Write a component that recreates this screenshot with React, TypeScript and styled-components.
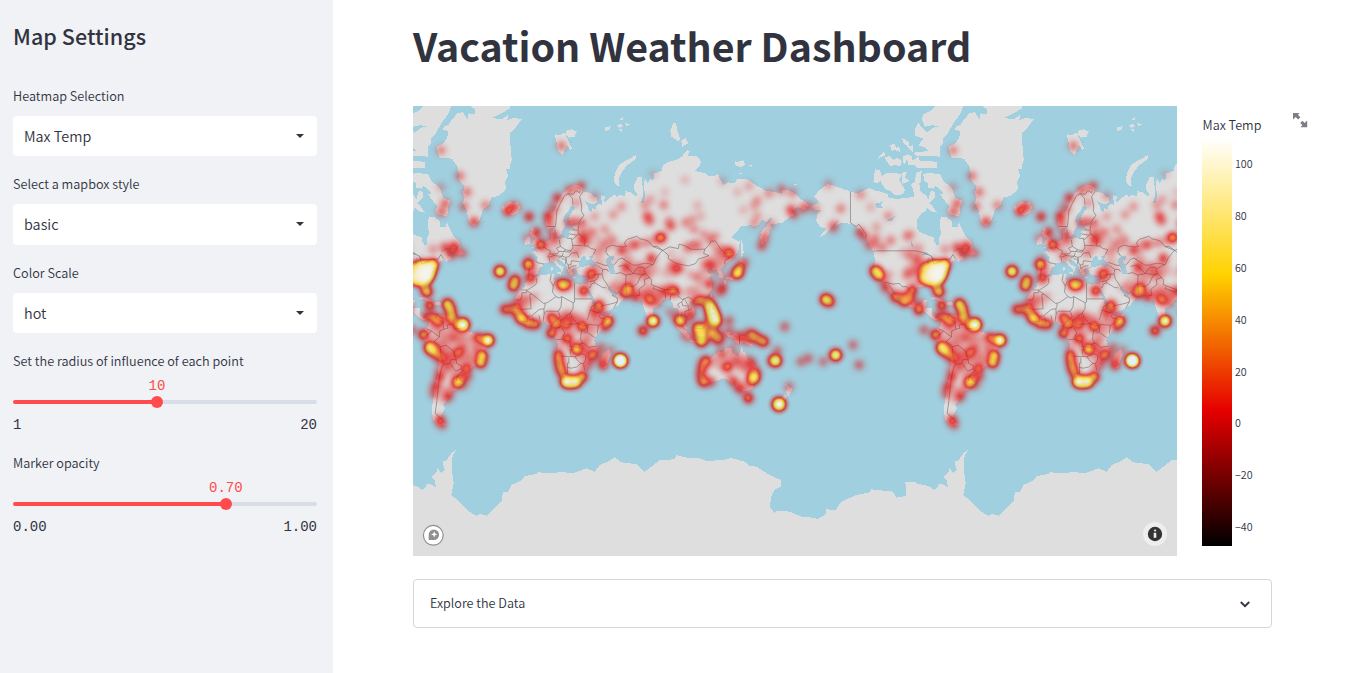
import React from "react";
import styled, { createGlobalStyle } from "styled-components";

const SANS = `"Source Sans Pro", "Noto Sans CJK SC", "Noto Sans", sans-serif`;
const MONO = `"Liberation Mono", monospace`;

const GlobalStyle = createGlobalStyle`
  *, *::before, *::after { box-sizing: border-box; }
  body {
    margin: 0;
    background: #ffffff;
    color: #31333f;
    font-family: ${SANS};
    overflow: hidden;
  }
`;

const Page = styled.div`
  display: flex;
  width: 1350px;
  height: 673px;
`;

const Sidebar = styled.aside`
  flex: 0 0 333px;
  padding: 20px 16px 0 13px;
  background: #f0f2f6;
`;

const SidebarTitle = styled.h2`
  margin: 0 0 37px;
  font-size: 21.5px;
  font-weight: 500;
  line-height: 32px;
  letter-spacing: 0.05px;
`;

const Field = styled.div<{ $gap: number }>`
  display: flex;
  flex-direction: column;
  margin-bottom: ${(p) => p.$gap}px;
`;

const Label = styled.label`
  height: 14px;
  margin-bottom: 13px;
  font-size: 12.68px;
  font-weight: 350;
  line-height: 14px;
  white-space: nowrap;
`;

const Select = styled.div`
  display: flex;
  align-items: center;
  justify-content: space-between;
  height: 40.3px;
  padding: 0 12px 0 11px;
  border-radius: 4px;
  background: #ffffff;
  font-size: 14.4px;
  font-weight: 350;
  line-height: 20px;
`;

const SliderValue = styled.div`
  display: flex;
  justify-content: center;
  width: 60px;
  margin-left: -30px;
  color: #ff4b4b;
  font-family: ${MONO};
  font-size: 14px;
  line-height: 16px;
`;

const SliderTop = styled.div`
  height: 18px;
  margin-top: -3px;
`;

const Track = styled.div<{ $fill: number }>`
  position: relative;
  height: 4px;
  margin: 4px 0 14px;
  border-radius: 2px;
  background: linear-gradient(
    to right,
    #ff4b4b ${(p) => p.$fill}%,
    #d9dde8 ${(p) => p.$fill}%
  );
`;

const Thumb = styled.span<{ $fill: number }>`
  position: absolute;
  top: -4px;
  left: calc(${(p) => p.$fill}% - 6px);
  width: 12px;
  height: 12px;
  border-radius: 50%;
  background: #ff4b4b;
`;

const Range = styled.div`
  display: flex;
  justify-content: space-between;
  font-family: ${MONO};
  font-size: 14px;
  line-height: 14px;
`;

const Main = styled.main`
  flex: 1;
  padding: 18px 0 0 80px;
`;

const Title = styled.h1`
  margin: 0 0 34px;
  font-size: 39.35px;
  font-weight: 700;
  line-height: 54px;
  white-space: nowrap;
`;

const ChartRow = styled.section`
  display: flex;
  align-items: flex-start;
  height: 450px;
`;

const MapFrame = styled.div`
  position: relative;
  width: 764px;
  height: 450px;
  overflow: hidden;
  background: #a0cfdf;
`;

const MapLogo = styled.svg`
  position: absolute;
  left: 9px;
  bottom: 10px;
`;

const InfoBadge = styled.svg`
  position: absolute;
  right: 10px;
  bottom: 10px;
`;

const Legend = styled.div`
  width: 70px;
  margin: 10px 20px 0 25px;
`;

const LegendTitle = styled.div`
  height: 22px;
  padding-left: 0.5px;
  font-size: 12.6px;
  font-weight: 350;
  line-height: 18px;
  white-space: nowrap;
`;

const LegendBody = styled.div`
  display: flex;
  height: 408px;
`;

const ColorBar = styled.div`
  width: 30px;
  height: 408px;
  background: linear-gradient(
    to top,
    #000000 0%,
    #e60000 33.3%,
    #ffd200 66.6%,
    #ffffff 100%
  );
`;

const Ticks = styled.div`
  display: flex;
  flex-direction: column;
  margin-left: 3px;
`;

const Tick = styled.span`
  flex: none;
  height: 51.9px;
  font-size: 10.7px;
  font-weight: 350;
  line-height: 51.2px;
`;

const Expander = styled.button`
  display: flex;
  align-items: center;
  justify-content: space-between;
  width: 859px;
  height: 49px;
  margin-top: 23px;
  padding: 0 18px 0 16px;
  border: 1px solid #d6d6d9;
  border-radius: 4px;
  background: #ffffff;
  color: #31333f;
  font-family: ${SANS};
  font-size: 12.62px;
  font-weight: 350;
`;

const ExpanderLabel = styled.span`
  padding-bottom: 2px;
`;

const FullscreenIcon = styled.svg`
  margin-top: 6px;
`;

/* Web Mercator with a 512px-wide world, drawn in thirds of a pixel. */
const WORLD = 1536;
type Pt = [number, number];

const project = ([lon, lat]: Pt): Pt => [
  378 + (lon * WORLD) / 360,
  675 - (WORLD / (2 * Math.PI)) * Math.asinh(Math.tan((lat * Math.PI) / 180)),
];
const parse = (s: string): Pt[] =>
  s.trim().split(/\s+/).map((p) => p.split(",").map(Number) as Pt);
const toD = (pts: Pt[]) =>
  "M" + pts.map(([x, y]) => `${x.toFixed(1)} ${y.toFixed(1)}`).join("L");
const geo = (s: string) => toD(parse(s).map(project));
const shift = (s: string, dx: number, dy: number) =>
  toD(parse(s).map(([x, y]) => [x + dx, y + dy]));

const LAND_GEO = [
  // Eurasia and Africa
  `-9,37 -9.5,38.7 -8.8,41 -9.2,43.1 -8,43.7 -4,43.4 -1.8,43.4 -1.2,44.6 -1,46 -2.5,47.3 -4.5,48 -4.7,48.5 -3,48.8 -1.5,48.6 -1.8,49.7 0.1,49.5 1.6,50.8 3.5,51.4 4.7,53 7,53.5 8.8,53.9 8.6,55.5 8.2,57 10.5,57.7 10.3,56.5 10.9,55.5 10,54.5 11,54 14,54 16.5,54.5 18.7,54.7 19.8,54.4 21,55.3 21,57 22.6,57.7 24.3,57.2 24.4,58.3 23.5,59.2 27,59.5 30,59.9 28,60.5 25,60.1 22.5,60 21.3,61 21.4,62.5 23,63.8 25.3,65 24.5,65.8 22.3,65.6 21.3,64.5 18.5,63 17.2,61.7 17.2,60.6 18.8,59.9 17.8,58.8 16.5,57.8 16,56.2 14.3,55.5 12.8,55.5 12.5,56.5 11.2,58.8 10.5,59.5 9,58.5 7,58 5.5,58.8 5,60.5 5,62 8,63.5 10.5,64.2 12.5,66 14,67.5 16,68.6 19,69.8 22,70.6 25.8,71.1 28.5,71 31,70.3 30,69.7 33,69.4 36,69.1 40.5,67.8 41,66.7 38,66.1 34,66.7 32.5,67.1 34.7,65 35,64.3 37.5,63.9 37,65.1 39.7,64.6 40,65.6 42.2,66.4 44,66 44.2,67 43.3,68.6 46,68.4 46.5,67.8 45,67 47,66.8 48.5,67.6 53.5,68.8 54.5,68.2 57,68.6 60,68.4 61,69.2 60.2,69.7 64.5,69.3 68.5,68.3 68.8,69.1 66.8,70 67,71.3 68.5,72 69,72.9 72.7,72.8 72.5,71.2 73.5,70 73.2,68.5 71.5,66.4 73.8,66.6 74.5,68.5 74,70.5 73.5,71.5 75.2,72.5 76,71.3 78,72.3 80.5,72.2 80.6,73.5 86.5,74.1 87,75 90,75.6 96,76 100,76.5 104,77.6 106,77.4 104.5,76.6 111,76.7 113.9,75.8 113,75 109,74 112,73.9 118,73.5 119,73 123,73 126,73.5 127,72.5 129.5,71.1 133,71.7 137,71.4 140,72.5 146,72.4 150,71.5 153,70.9 160,69.6 165,69.5 170.5,69 170.8,70 176,69.8 180,68.9 185,67.3 188.5,66.4 190,65.9 188,65.2 186.5,64.4 182,65.4 180,65 178.8,64.5 177.5,64.7 179.4,62.8 177,62.5 171,60.3 166,60 163.5,59.8 163,58.3 162,57.8 162,56.2 160,54.7 160,53.2 158.5,52.9 156.7,51 155.6,54.5 156,56.8 157.5,57.8 161.8,60.4 163.7,61.3 164.4,62.5 160,60.5 156.7,61.5 154.5,59.6 151.5,59 149,59.5 142,59 139,57 135.3,54.8 138.5,53.8 141.3,53.1 140.5,50.5 140,48.4 136.5,45.3 132,43.2 130.7,42.3 127.5,39.8 129.3,37 129.2,35.2 126.5,34.5 126.3,37.5 125,38.5 125,39.7 121.5,39 121.5,40.8 118,39.1 118.8,37.5 122.5,37.1 119.3,35 121.8,32 121.9,30 121.7,28.3 119.5,25.7 116.5,23 113.5,22.2 110.5,21.2 108.3,21.6 106,19.5 106.5,18 109,15.5 109.2,12 107,10.4 105,8.7 104.8,10.3 102.5,12 100.9,13.4 100,13.3 99.3,11 99.5,9.3 100.5,7.3 102.2,6.2 103.4,4.2 104.2,1.4 103.4,1.4 101.3,2.8 100.3,5.6 98.3,8 98.5,10.5 98.6,13 97.3,16.5 95.4,15.8 94.3,16.2 94.3,18.5 92.3,20.8 91.5,22.5 90,21.9 87,21.5 86,20 82.5,16.7 80.2,15.5 80.2,13.3 79.8,10.3 78,8.4 77.4,8.2 76,10.5 74.6,13.8 73,17.5 72.7,20.5 72.3,21.3 70,20.9 69,22.3 67.5,23.9 66.5,25.3 61.6,25.1 57.5,25.6 56.8,27 54.5,26.6 51.3,27.8 50,30.2 48.2,29.9 48.5,28 50.2,26.5 50.8,25 51.5,25.8 51.6,24.2 54.2,24.2 56.2,26 56.6,24.5 58.8,23.5 59.8,22.4 57.8,20.4 55.3,17.5 52.2,15.7 48.5,14 45,12.8 43.4,12.7 42.7,16 41,18.5 39,21.3 37.2,24.8 35,28 35,29.5 34.3,28 32.5,29.8 33.5,28 34,26.8 35.5,24 37.2,21 37.4,18.7 39.3,15.7 41.5,13.5 43.2,11.5 44.5,10.5 48,11.1 51.2,11.9 50.8,9.5 48,4.5 44,1 41.5,-2 39.5,-4.5 39,-6.7 39.5,-8.5 40.5,-11 40.7,-15 37,-17.7 34.8,-20 35.5,-23.8 32.8,-25.8 32.5,-28.5 30,-31.3 27,-33.6 22,-34.1 20,-34.8 18.4,-34.2 18.2,-32 16.5,-28.6 14.8,-25 14.4,-22 12,-18 12.5,-14.5 13.7,-11 12.3,-6 9.2,-2.5 8.8,-0.7 9.6,2 9.5,4 8,4.5 6,4.3 4.4,6.3 1,6 -2,4.8 -4.5,5.2 -7.6,4.4 -11.5,6.9 -13.3,9 -15,11 -16.7,12.5 -17.4,14.7 -16.4,16.5 -16.3,19.5 -17,21 -15.8,24 -13,27.8 -10,29.5 -9.7,31.5 -8,33.4 -6,35.8 -2,35.1 1,36.5 5,36.8 9.8,37.3 11,37 10,34.3 11.2,33.2 15.2,32.3 15.5,31.5 19,30.3 20,31 20,32.5 23,32.6 25,31.6 29,30.9 31,31.5 34.2,31.3 35,33 36,35 36,36.8 33,36.1 30.6,36.6 28,36.8 26.5,38.5 26.3,40 29,41 31.3,41.2 35,42 38,41 41.5,41.5 39,43.7 37.5,44.8 38,46.8 39,47.2 35,46.2 36.5,45.3 33.7,44.4 32.7,45.4 33.5,46 31,46.6 29.5,45 28.6,43.7 27.8,42.5 28.5,41.3 26.5,40.6 23.8,40.3 22.8,39.5 24,38 23,36.6 21.6,37 20.5,38.8 19.4,41 19.3,42 15.5,44 13.7,45.3 12.4,45.2 12.5,44 14,42.4 16,41.6 18.4,40.2 17,40.5 16.5,38.5 15.7,38 15.8,39.8 12.5,41.6 10.3,43.5 8.5,44.3 6,43.1 3.2,43.2 3,41.8 0.5,40.5 -0.3,39 -0.7,37.7 -2,36.7 -5.5,36.1 -6.5,37`,
  // Americas
  `-168,65.6 -164,66.5 -162,66.2 -166.5,68.3 -163,69.8 -157,71.3 -152,70.8 -145,70 -141,69.6 -136,69 -130,70 -128,70.4 -124,69.8 -120,69.5 -115,68.9 -114,67.8 -108,67.7 -102,67.8 -97,68.3 -95.5,68.1 -94.5,71.8 -92,71 -92,69.7 -88,68.5 -86,67.5 -85,69.5 -82,69.7 -81.5,68 -86,66.2 -88,64.2 -91,63.5 -94.5,61 -94.5,58.8 -92.5,57 -85,55.2 -82.2,55 -82,53 -80,51.3 -78.8,52 -79,54.5 -77,56.5 -78.3,59 -77.5,62.3 -73.7,62.3 -70,61 -69.5,59 -66,58.7 -64.5,60.3 -62,57.5 -60,55.2 -57,53.7 -55.7,52.3 -59,50.3 -66,50.2 -69,48.6 -65,49.2 -65,47.2 -61,45.5 -65.5,43.6 -66.5,45 -70,43.7 -70.8,42 -74,40.6 -76,37 -76,35 -81.3,31.5 -80.2,26 -81.2,25.3 -82.7,28 -84,30 -89.5,30 -91,29.3 -95,29.2 -97.3,27.5 -97.6,23 -96,19.3 -94.5,18.2 -91,18.7 -90,21 -87,21.5 -88,18 -88.5,15.8 -84,15.8 -83.3,14 -83.5,11 -81,9 -79,9.5 -77.3,8.6 -75.5,10.7 -71.5,12.3 -71.5,10.9 -68,11 -62,10.6 -60,8.5 -57,6 -52,4.8 -50,1.5 -50,-.5 -48,-.7 -44.3,-2.7 -40,-2.9 -35.3,-5.2 -34.9,-8 -37,-11.5 -39,-13 -39,-17.7 -41,-22 -44.5,-23 -48.5,-26 -48.8,-28.5 -52.2,-32.2 -54.5,-34.9 -58.4,-34 -57,-36.5 -58,-38.2 -62,-39 -62.3,-40.8 -65,-41 -63.7,-42.5 -67.5,-46 -65.8,-47.5 -69,-51 -68.3,-53 -65.2,-54.7 -70,-55.5 -74.5,-52.5 -75.5,-48 -74.5,-44 -73.5,-40 -73.5,-37 -71.5,-31 -70.3,-22 -70.3,-18.3 -76.2,-14 -79.5,-7.5 -81.3,-5 -80.2,-2.5 -80,0.8 -77.5,4 -77.8,7.5 -80,7.4 -83,8.3 -85.8,10.5 -88,13 -94,16 -99,16.6 -105.5,20.2 -105.5,22.6 -109.3,26 -112.5,30 -114.7,31.7 -111.5,26 -109.5,23 -112.2,25 -115,28 -117,32.5 -120.5,34.5 -124,40 -124,46 -124.7,48.4 -122.5,48.5 -127,51 -130,54.5 -134,58 -140,59.8 -145,60.3 -149,60 -152,59.2 -150,61.2 -154,59 -158,56.3 -163,54.8 -158,58.3 -162,58.7 -165,61 -164.5,63 -161,64.5 -166,64.5`,
  // British Isles, Ireland
  `-5.5,50 -3,50.6 1.3,51.1 1.7,52.7 0,53.5 -1.5,55 -3,56 -2,57.5 -4,57.7 -3,58.6 -5,58.6 -6,56.7 -5,55 -3,54.5 -3.2,53.4 -4.5,53.2 -4.2,52.3 -5.2,51.8 -3,51.4`,
  `-6.2,52.2 -9.8,51.6 -9.8,53.5 -8.3,55.1 -6,55 -6,53.5`,
  // Mediterranean islands
  `12.5,38 15.6,38.2 15.1,36.7`, `8.3,39 9.7,39.2 9.6,41.1 8.3,40.8`, `23.6,35.4 26.2,35.2 24.5,34.9`, `32.4,34.8 34.5,35.6 33,34.6`,
  // Japan, Sakhalin
  `130,31.3 131.5,31.5 131.8,33.6 130,33.5`, `131,34.2 133,34.4 135.5,33.6 137,34.6 140,35.1 141,36.8 142,39.5 141.2,41.4 140,40.5 139.5,38.3 137,37 135.8,35.6 132.6,35.5`,
  `140,42.2 141,41.8 143.2,42.1 145.3,43.3 141.8,45.4 141.5,43.4`, `142.2,54.2 143.2,52.5 143.3,49.3 144.5,48.8 142.8,47.3 143.3,46.6 142,46 142,50 141.8,53`,
  // South-east Asia
  `120.1,23.3 121,22 122,25 121.3,25.2`, `109,19.5 111,20 110,18.4`, `80,9.7 81.8,7.3 80.4,6`,
  `95.3,5.6 98,4.5 103.5,0 106,-3 105.8,-5.8 104.3,-5.6 100.5,-1 97.5,2`, `105.2,-6.6 108.5,-6.7 114.4,-7.8 114.3,-8.6 108,-7.7`,
  `109,1.5 111.3,2.6 113.5,3.3 116.7,7 119,5.2 117.7,2 116.5,-3.5 114.5,-4.1 110.2,-2.9`, `119.8,.5 125,1.5 121,.4 123.3,-1 121.7,-2 123,-5 121,-2.8 119.6,-5.5 118.8,-2.8`,
  `120.6,18.4 122.2,18.4 121.6,15 124,12.7 120.7,13.8`, `122,7 125.5,9.7 126.5,7.3 125.4,5.6 123.5,7.6`, `122,11.8 123.4,10.8 125.5,12.3 124.5,10.2 122.5,9.8`,
  `131,-.8 134,-.9 135,-3.3 138,-1.7 144.5,-3.8 147.8,-6 147.2,-7.4 150.7,-10.5 147.5,-10 144,-7.7 141,-9.1 138.2,-8.3 138,-5.5 133,-4 132,-2.8`, `148.5,-5.7 152,-4.3 151,-6.2`,
  // Madagascar
  `49.3,-12 50.4,-15.5 47.2,-25 45,-25.5 43.3,-22 44.5,-16.2 48,-13.6`,
  // Australia, New Zealand
  `142.5,-10.8 143.7,-14.4 145.3,-15 146.4,-19 149.3,-21.2 153,-25.3 153.5,-28.3 151.5,-33 150,-37.4 146.5,-39 143.5,-38.8 140,-37.5 138.3,-35.5 137.5,-33 135.8,-34.9 132.2,-32 129,-31.6 124,-33.2 120,-34 116,-35 115,-34 115.7,-31.7 113.5,-26 114.1,-22 117,-20.6 122,-18 124,-16.3 126.8,-14 129.6,-15 131,-12.2 135.5,-12 135.6,-15 140,-17.7 141.6,-14`,
  `144.7,-40.8 148.2,-40.9 147.2,-43.5 146,-43.4`, `172.8,-34.5 175.5,-36.6 178.4,-37.8 175.3,-41.6 173.8,-39.3 174.7,-37.3`, `172.8,-40.6 174.2,-41.8 170.7,-45.9 168.5,-46.6 166.6,-45.9`,
  // Caribbean, Newfoundland, Vancouver Island
  `-84.9,21.9 -82.5,23.1 -79,22.4 -74.2,20.2 -77.5,19.9 -80,21.6`, `-74.4,18.4 -73,19.9 -70,19.7 -68.4,18.5 -71,17.7`, `-59.2,47.7 -55.9,51.5 -55,49.6 -52.8,47.5 -55.5,47`, `-128,50.8 -125,50 -123.5,48.4`,
  // New Caledonia
  `164,-20.2 167,-22.3 165.5,-21.8`,
];

const WATER_GEO = [
  `47,45 50,46.8 53,46.8 53,45.3 51,44.5 50.5,43.5 53,42 52.8,40 54,37 50,37.4 49,40.2 47.5,43`,
  `-124,66.3 -121,66.5 -118,67 -119.5,66 -118,65 -122,65`, `-116,61 -113,61.8 -109,62.8 -112,61`, `-98.5,53.8 -96.5,51 -98,50.5`,
  `104,51.6 108,53 110,55.6 107,52.4`, `31.8,.3 34,.2 33,-2.5 31.8,-1.5`, `58.5,45.5 61,46 60,44`, `30.5,61 32.5,60.8 31,60`,
  `-92,46.8 -88,48.5 -84.5,46.8 -88,47`, `-87.5,42 -86,42.5 -85,45.8 -87.5,45`, `-82,43.5 -80,45 -84,46`,
];

const LAND_TRACED = [
  shift(`265,122 285,113 298,95 300,75 285,72 288,60 300,58 312,40 328,22 345,18 352,30 358,42 362,22 380,25 380,10 368,0 485,0 485,8 460,22 432,36 462,40 480,26 478,42 500,35 522,40 510,55 495,75 485,80 485,110 490,130 488,150 494,155 488,170 486,188 474,190 480,210 470,230 475,245 470,255 450,270 430,275 420,300 405,310 395,340 378,362 362,345 355,310 345,290 350,275 345,262 350,240 335,225 330,185 312,158 275,155`, 1341, 0),
  shift(`228,0 310,0 300,25 285,45 270,70 262,85 250,95 248,115 240,120 240,152 210,150 170,150 160,140 205,135 195,125 175,118 190,98 165,90 165,70 175,50 190,70 200,80 220,65 242,60 215,58 195,62 185,40 190,25 210,15`, 1341, 0),
  shift(`145,165 165,160 175,150 180,165 210,165 230,168 232,185 170,185 165,178 145,178`, 1341, 0),
  shift(`45,190 60,192 65,210 80,202 105,200 125,205 118,220 125,235 135,250 130,262 118,268 100,265 90,255 78,250 68,238 62,225 50,232 40,228`, 1341, 0),
  shift(`75,155 90,150 100,162 112,155 125,165 120,182 105,176 92,182 80,165`, 1341, 0),
  shift(`52,160 60,148 72,137 76,150 65,152`, 1341, 0),
  shift(`125,95 135,100 147,110 145,123 130,110`, 1341, 0),
  shift(`90,118 105,113 108,125 118,122 120,138 105,132 95,135`, 1341, 0),
  shift(`130,150 145,145 158,152 150,175 140,160 135,176 128,170`, 1341, 0),
  shift(`140,120 160,118 158,138 150,132`, 1341, 0),
  shift(`125,200 140,198 135,215 150,225 140,228 125,235`, 1341, 0),
  shift(`168,200 185,195 183,225 170,240 176,270 162,275 160,250 152,235 165,228`, 1341, 0),
  shift(`190,205 205,200 240,205 250,225 275,245 285,275 308,285 300,305 298,332 270,325 262,315 268,300 255,285 240,265 250,262 235,245 225,240 222,248 205,245 205,232 192,225`, 1341, 0),
  shift(`203,290 215,297 230,320 210,315 200,305`, 1341, 0),
  `M425 85L440 88L455 80L462 95L470 112L478 128L472 134L462 116L455 130L450 148L435 135L430 105Z`,
  `M458 75L475 70L491 76L485 92L470 95L460 88Z`,
  `M610 238L602 225L606 200L618 178L635 165L655 155L668 147L671 157L640 180L626 200L617 220L620 240Z`,
  `M575 65L595 60L588 72L577 75ZM612 58L625 52L630 62L620 65ZM620 42L630 30L632 40ZM636 52L656 54L640 60ZM617 70L628 68L626 77Z`,
  `M772 75L780 52L789 50L792 70L802 100L795 105L775 92ZM805 105L818 96L825 112L808 122Z`,
  `M965 165L975 168L990 163L998 175L985 183L966 178ZM1003 175L1018 178L1017 183ZM978 200L988 203L980 206ZM1143 233L1155 236L1145 239Z`,
  `M265 302L278 298L288 285L300 292L314 288L322 305L316 318L300 328L275 322Z`,
  shift(`0,165 12,170 30,180 45,160 68,170 66,152 55,140 68,130 75,115 85,130 95,118 88,95 100,92 115,70 132,58 120,75 117,85 118,130 122,160 115,195 145,220 168,245 190,257 200,252 222,257 240,238 265,215 270,185 285,185 295,165 325,152 335,138 370,132 375,127 430,130 435,125 480,130 520,115 545,125 560,105 585,95 605,82 625,97 672,103 695,125 715,110 740,90 785,88 790,75 830,85 855,83 880,93 930,90 955,84 995,95 1010,108 1030,110 1070,135 1103,150 1103,170 1085,178 1073,205 1072,232 1085,250 1090,242 1130,245 1165,260 1200,263 1215,267 1240,252 1240,238 1268,240 1285,215 1330,195 1370,187 1375,178 1440,185 1450,203 1480,198 1477,155 1505,155 1512,162 1536,165 1536,380 0,380`, 0, 972),
];

const BORDERS = [
  `-123,49 -95,49 -89,48 -84,46.5 -82.5,42.5 -79,43.5 -75,45 -71,45 -69,47.3 -67,45`,
  `-141,69.6 -141,60.3 -137,59 -135,59.8 -130,56 -130,54.7`, `-117,32.5 -111,31.3 -106.5,31.7 -104.5,29.6 -101.5,29.8 -99.5,27.5 -97.2,26`,
  `5.5,59 11.5,59 12,61 12.5,64 14.5,66 18,68.5 20.5,69 24,68.8 26,69.8 28.5,69.2 29,69.7`, `20.5,69 23.5,67.8 24,65.9`, `31,69.6 28.5,68.2 30,65.7 29.7,64.2 31.5,62.8 28,60.5`,
  `28,59.4 27.5,57.5 28.2,56.1 31,54.8 32.5,53.2 31.5,51.3 34.5,51.2 36,50.2 40,49.5 38.3,47.2`, `24,57.8 27.3,57.6`, `21,56.3 26.5,55.7 28.2,56.1`, `22.8,54.4 23.5,53.9 26.5,55.5`, `19.8,54.4 22.8,54.4 23.5,52 24,50.7 22.5,49 18.8,49.5 15,51 14.3,53.9`, `23.5,51.5 30.5,51.3`,
  `15,51 12.2,50.2 13.8,48.7 17,48.7 18.8,49.5`, `17,48.7 22,48.4 22.5,49`, `9.6,47.5 13,47.6 13.8,48.7`, `7.5,47.6 9.6,47.5 10.5,46.8 7,46 6.1,46.3 7.5,47.6 8.1,49 6.2,49.5 2.6,51`, `7,46 7.5,43.8`, `10.5,46.8 13.5,46.5 16.4,46.5 17,48.1`, `13.7,45.5 16.4,46.5 18.8,45.9 21,46.2 22.8,47.9 26.7,48.2 28.2,45.5`,
  `18.8,45.9 19.3,44.8 19.2,43.5 20.5,42 22.5,42.3 22.7,44.2 28.5,43.8`, `15.8,45.2 19,45 18.5,42.6`, `20.5,42 20.9,40 22.9,41.3 26.4,41.7`, `-1.8,43.4 3.2,42.5`, `-8.7,42 -6.5,41.9 -7.2,38 -7.4,37.2`,
  `49,46.5 47,48.4 47.5,50.4 51,51.6 55,51 59,50.7 61.5,51 60,52.5 62,54 69,55.3 71,54.2 73.5,54 77,53.2 80,51 83,51 87,49.2 92,50.8 98,50 98.5,52 102.5,51.3 107,49.7 113,49.7 116.7,49.8 120,52 120.8,53.3 124,53.3 127.5,50 131,47.7 135,48.4 133,45 131,44.5 130.6,42.5`,
  `87,49.2 91,47 91,45.2 96.5,42.8 105,41.6 110,42.7 112,45 119.5,46.7 115.7,47.8 116.7,49.8`, `80,51 87,49.2 85.5,48.3 82.3,45.4 80.2,42.2 74,40 73.8,39.5 75,37.3 79,34 79,31 81.2,30.2 88,28 92,27.8 97.3,28.3 98.7,25.5 97.5,24 101,21.5 105,23.2 108,21.6`,
  `53,42.2 56,45 58.5,45.5 61,44.3 66,42 70,42 71,42.4 75,43 80.2,42.2`, `56,41.3 60,42 66.5,37.4 61.2,36.6 57,38 54,37.3`, `66.5,37.4 71.5,37 74.8,37.2`, `66.5,37.4 67.8,39.5 70.5,41 73.5,40.7`, `61.2,36.6 60.9,31.5 61.7,25.2`, `60.9,29.8 66.3,29.8 69.3,31.8 71.5,36 74.8,37.2`, `68.2,23.8 71,24.5 70,28 74.5,31 74,34 78,35.3`,
  `81.2,30 80.1,28.8 84,27.3 88,26.4 88,28`, `88.8,26 89,22`, `92.3,21 92.6,24.1 97,28`, `98.8,16.2 97.5,18.5 100.5,20.2 101,17.6 104.7,17.4 105.5,14.4 102.5,13.6 102.8,11.8`, `100.5,20.2 102,22.4`, `105.5,14.4 107.5,15.5 104,19 102.5,21.5`,
  `41.5,41.5 44.8,39.7 44.3,37 42.3,37.2 36.5,36.5`, `44.8,39.7 48,39.6 48.8,38.4`, `40,43.5 46.5,41.8 48.5,41.9`, `44.3,37 45.5,34 48,31 48.5,30`, `42.3,37.2 41,34.4 38.8,33.3 35.8,32.7`, `38.8,33.3 39.2,32.1 37,31.5 36,29.2 34.9,29.5`, `39.2,32.1 44.7,29.2 47.5,29`, `51.5,24.3 55.2,22.7 55,20 52,19 48,18.2 43.3,17.3 42.8,16.5`, `55,20 52.5,15.7`,
  `25,31.6 25,22 25,20 24,19.5 16,23.5 14.2,22.6 12,23.5 9.5,26.3 10,30.2 7.8,33.5 8.6,37`, `25,22 36.9,22`, `10,30.2 11.5,33`, `12,23.5 5.8,19.5 3.3,19 -4.8,25 -8.7,27.4 -3,30.5 -1.5,32.2 -2,35`, `-8.7,27.7 -13,27.7`, `-8.7,27.4 -8.7,26 -12,26 -12,23.4 -13,21.3 -17,21.2`, `-4.8,25 -6.5,25 -5.5,15.5 -12,15 -16.5,16.2`, `4.2,19 4.2,16.8 3.5,15.4 0.2,15 -5.4,10.5 -8,10.2 -11.5,12.3`, `3.5,15.4 3.6,11.7 2.8,6.4`, `3.6,11.7 5,13.8 13.5,13.7 15.5,16.8 16,23.5`, `13.5,13.7 15,10 9,4.8`, `24,19.5 24,15.7 22,12.6 23.5,8.8 27.3,5.1 31,3.7 36,4.5 42,4 48,8 43,9 42.5,11`, `34,4.2 34,-.9 37.7,-3.6 39.2,-4.7`, `41.8,4 41,-1.6`, `22,12.6 15.3,7.5 14.5,2.2 9.8,2.2`, `15.5,7.5 18.5,4.5 27.3,5.1`, `16,2.2 18,-1 16.2,-5.8 12.3,-6`, `16.2,-5.8 21.8,-7.3 22,-11 24,-11 24,-13 22,-13 22,-16.2 23.3,-17.7 14,-17.4`, `30.8,3.5 29.5,-2.5 29.3,-6 30.8,-8.5 28.4,-9.2 28.6,-12 29.8,-12.2 24,-11`, `30.8,-8.5 33,-9.5 34.8,-11.5 40.4,-10.5`, `21,-18.3 21,-22 20,-22 20,-28.4 16.5,-28.6`, `23.3,-17.7 25.3,-17.8 27.7,-20.8 29.4,-22.2 26.5,-24.5 22.7,-25.3 20,-24.8`, `29.4,-22.2 31.3,-22.4 32,-25.8 32.1,-26.8`, `25.3,-17.8 30.4,-15.7 33,-17 32.5,-20.5 31.3,-22.4`, `34,8 36,14 37,17 38.6,18`, `36,14.5 42.5,12.5`, `-4.7,10 -3,5`, `0,11 1,6`, `-8.5,10 -8,6.5 -11,7`,
  `-77.4,8.6 -77,7.5`, `-71.5,12 -73,9.2 -67.5,6.2 -67,1.2 -70,-.2 -70,-4.2 -73.7,-7.3 -70.5,-9.5 -69.5,-11 -68.8,-17.5 -70.3,-18.3`, `-69.5,-11 -65.3,-10 -60.3,-13.8 -58.2,-19.8 -58,-22 -54.3,-24 -54.6,-25.6 -53.7,-27.2 -57.6,-30.2 -58.3,-33.5`, `-62.6,-22.2 -58.6,-27.2 -54.6,-25.5`, `-68.8,-17.5 -67,-22.8 -62.6,-22.2 -61.8,-19.6 -58.2,-19.8`, `-67,-22.8 -68.5,-25 -70,-31 -71,-38 -71.8,-44 -73,-50 -68.5,-52.3`, `-57.6,-30.2 -53.4,-33.7`, `-67,1.2 -64,2 -64.7,4.2 -60.7,5.2 -59.8,8.3`, `-60.7,5.2 -59.5,1.3 -52.5,2.3 -51.5,4.2`, `-78.8,1.4 -75.4,-.1 -80.3,-4 -80.3,-3.4`, `-75.4,-.1 -70,-4.2`,
  `141,-2.6 141,-9.1`, `109.6,2 114.8,1.5 117.6,4.2`,
];

const LAND_D = LAND_GEO.map((s) => geo(s) + "Z").concat(LAND_TRACED).join("");
const WATER_D = WATER_GEO.map((s) => geo(s) + "Z").join("");
const BORDER_D = BORDERS.map(geo).join("");

/* Weather stations: x, y, weight, grouped by map quadrant. */
const STATIONS: { dx: number; dy: number; data: string }[] = [
  { dx: 0, dy: 0, data: `84,133,.15 140,210,.18 84,243,.1 162,258,.18 97,292,.2 85,318,.2 152,302,.18 218,298,.15 183,348,.27 285,315,.35 300,300,.22 315,305,.1 348,332,.3 445,120,.18 433,275,.28 468,252,.2 485,245,.08 505,240,.22 490,290,.12 545,270,.12 405,330,.3 405,350,.15 425,310,.15 415,300,.1 545,332,.1 600,326,.12 625,302,.12 720,203,.06 712,280,.1 695,297,.12 703,330,.22 710,345,.18 752,297,.15 755,258,.06 370,378,.28 420,385,.2 340,395,.12 470,350,.15 490,348,.12 508,352,.18 575,370,.12 540,378,.12 743,395,.45 510,400,.3 510,380,.1` },
  { dx: 768, dy: 0, data: `5,360,.22 0,345,.12 50,350,.15 75,370,.13 70,340,.1 85,298,.08 95,330,.08 48,222,.07 105,385,.12 125,400,.17 140,390,.1 240,240,.1 205,258,.07 160,225,.08 265,283,.12 255,300,.1 222,312,.07 265,330,.1 255,352,.12 300,262,.14 337,250,.18 370,260,.15 365,310,.22 375,325,.2 402,308,.18 418,300,.15 440,310,.12 478,235,.12 515,308,.15 495,358,.18 492,370,.1 305,355,.15 290,385,.1 285,400,.18 278,420,.22 575,265,.14 605,303,.08 658,330,.13 622,362,.1 572,378,.22 585,390,.16 620,395,.13 600,420,.15 640,425,.15 620,415,.1 665,403,.16 715,390,.15 725,385,.08 750,425,.1 155,430,.12` },
  { dx: 0, dy: 402, data: `60,28,.12 95,22,.22 125,18,.27 110,30,.13 130,35,.13 115,45,.2 150,40,.18 383,15,.42 345,72,.52 350,78,.15 422,0,.15 420,50,.17 485,40,.13 575,10,.13 600,0,.1 560,30,.13 625,30,.27 665,15,.22 700,8,.13 715,55,.3 475,95,.18 28,75,.7 60,74,.65 50,82,.75 45,88,.8 48,100,.8 42,110,.85 35,118,.75 15,88,.55 12,105,.6 25,102,.8 28,120,.6 12,122,.5 30,90,.7 5,80,.35 0,115,.45 42,155,.55 35,145,.2 50,195,.38 60,232,.33 40,230,.3 75,240,.38 103,192,.6 112,208,.5 116,228,.5 118,240,.2 150,255,1 148,252,.5 225,301,.98 195,292,.3 205,300,.2 208,347,.6 203,368,.6 32,284,.5 50,322,.7 60,332,.5 70,345,.27 85,352,.22 135,428,.6 128,420,.15 150,420,.15 162,385,.36 135,337,.35 120,295,.18 150,325,.18 85,310,.12 105,350,.18 125,360,.1 105,380,.17 165,410,.18 80,410,.28 68,440,.27 65,465,.15 105,470,.25 95,450,.08 80,540,.33 88,555,.18 100,320,.08 150,290,.1 175,350,.1 185,325,.08 80,265,.1 261,94,.82 301,138,.55 306,120,.5 355,112,.33 345,108,.1 450,135,.6 438,128,.2 465,132,.3 512,152,.42 535,100,.35 275,208,.35 292,208,.22 310,208,.35 325,235,.6 318,225,.2 345,250,.4 368,252,.42 320,185,.18 345,180,.13 365,170,.1 415,232,.4 428,250,.4 415,280,.45 440,245,.12 460,255,.38 460,230,.18 480,235,.18 507,260,.45 463,295,.38 490,328,.58 515,315,.12 540,345,.38 520,340,.12 585,243,.6 575,262,.28 558,195,.42 565,215,.2 540,215,.2 545,235,.1 530,290,.1 515,300,.12 565,320,.15 570,375,.33 575,360,.1 595,330,.13 622,362,1.5 437,345,.38 437,362,.33 441,380,.4 447,398,.4 460,425,.95 474,427,.65 488,425,.85 508,410,.5 520,380,.15 530,360,.13 640,80,.3 645,145,.48 637,162,.33 670,170,.28 710,180,.38 700,160,.12 735,180,.12 605,145,.12 690,100,.12 680,85,.1 720,150,.12 750,155,.18 765,158,.16 720,243,.95 690,272,.42 700,110,.1 735,195,.08 660,130,.08 660,105,.08 530,125,.12` },
  { dx: 768, dy: 402, data: `183,42,.4 180,30,.12 205,100,.65 210,88,.35 218,75,.2 228,65,.12 180,110,.15 160,145,.3 155,160,.1 123,130,.25 15,152,.42 25,85,.27 10,75,.1 85,110,.1 125,75,.2 130,90,.08 80,15,.16 60,25,.12 110,70,.08 75,155,.1 95,180,.4 78,186,.28 120,175,.18 123,200,.7 130,215,.8 135,230,.8 138,242,.8 120,190,.2 33,242,.65 65,225,.22 90,265,.58 97,285,.58 97,305,.58 80,262,.2 108,262,.25 130,280,.45 145,295,.28 180,242,.2 180,270,.13 45,285,.13 150,310,.13 0,215,.1 215,290,.18 250,285,.42 265,295,.28 285,305,.42 240,305,.13 320,362,.85 310,362,.25 325,332,.18 190,325,.15 160,340,.18 205,365,.12 175,380,.38 110,362,.42 100,385,.28 102,425,.42 95,405,.2 125,425,.18 150,375,.06 195,425,.22 212,447,.28 238,475,.4 245,370,.22 262,395,.22 255,412,.7 250,425,.25 225,380,.08 330,493,1 330,492,.6 360,440,.18 347,260,.2 395,365,.17 418,355,.19 463,365,.17 500,345,.9 552,315,.18 570,375,.2 470,178,.65 482,185,.4 620,93,.6 630,105,.6 650,140,.22 660,105,.1 680,172,.4 705,185,.42 720,175,.3 730,150,.35 700,170,.13 750,210,.42 755,190,.12 765,270,.2 720,45,.16 745,60,.18 715,100,.13 740,92,.15 765,90,.3 768,110,.35 755,120,.12` },
];

/* Fainter stations that fill in the inhabited regions: x, y pairs. */
const BACKGROUND: { dx: number; dy: number; w: number; data: string }[] = [
  { dx: 0, dy: 402, w: 0.08, data: `75,285 95,285 115,280 135,290 130,270 100,300 60,300 165,305 178,290 140,310 90,335 112,330 130,350 160,345 172,365 150,360 145,380 140,400 120,395 90,395 85,375 75,392 150,405 155,440 118,445 112,458 75,425 60,455 95,478 70,255 88,250 60,260 110,255 130,250 190,320 195,335 78,360 95,365 115,370 55,205 90,236 120,255 75,325` },
  { dx: 0, dy: 402, w: 0.075, data: `300,195 335,200 310,220 422,262 445,270 475,250 495,245 520,265 535,255 555,250 470,312 450,300 480,280 500,318 520,328 545,330 560,335 530,372 548,225 430,310 432,330 512,375 445,225 470,220 500,230 515,240 540,270 545,200 335,240 355,255 330,170 310,180 345,125 480,315 500,345 560,355 580,345` },
  { dx: 0, dy: 402, w: 0.065, data: `400,22 430,8 440,-10 380,0 365,-15 410,-30 412,-48 400,10 500,-20 525,-10 528,8 490,20 555,0 580,22 548,42 600,12 350,50 370,90 410,45 500,30 515,15 460,-50 480,-55 560,60 550,75 590,-10 530,-25 575,85 545,110 520,105 640,25 650,12 680,10 720,5 750,-10 725,-5` },
  { dx: 0, dy: 402, w: 0.065, data: `545,90 560,105 525,112 612,125 620,150 655,155 690,165 722,165 745,170 670,90 652,95 700,88 680,110 715,78 728,92 650,60 642,50 600,60 630,100 645,115 670,75 690,75 710,100 740,150 760,140 700,175 725,190 655,165 625,160 590,140 630,135 685,150 705,140` },
  { dx: 768, dy: 402, w: 0.06, data: `5,40 20,92 40,60 50,22 95,30 140,50 150,70 165,60 115,85 100,100 60,150 90,145 112,132 95,120 50,160 160,125 30,228 48,225 20,215 60,210 75,215 -10,100 0,85 10,100 35,85 15,65 60,15 90,10 105,75 120,60 135,75 150,50 168,45 170,30 150,30 135,20 165,75 145,95 155,110 130,145 145,155 5,140 25,160 75,110 60,100` },
  { dx: 768, dy: 402, w: 0.1, data: `115,225 112,245 80,290 72,292 120,300 155,298 190,282 200,290 230,300 240,275 135,265 150,285 140,285 108,275 105,298 165,285 55,295 15,230 40,255 110,185 60,235 150,250 125,255 270,298 275,305 225,285 210,300` },
  { dx: 768, dy: 402, w: 0.07, data: `95,370 92,395 125,370 140,360 165,352 190,355 215,350 238,355 250,362 225,368 218,385 238,388 245,400 242,412 182,412 188,420 225,440 235,462 112,430 165,385 190,370 200,345 150,340 205,370 130,425 95,412 100,372 205,438 240,430 262,405 255,380` },
  { dx: 768, dy: 402, w: 0.06, data: `700,35 730,22 755,45 735,75 720,88 755,75 750,100 670,155 690,165 715,165 732,165 740,192 640,120 645,130 665,160 740,50 710,110 725,105 650,150 715,185 735,135 612,85 735,180 745,200 720,160 590,0 610,5` },
];

const STATION_POINTS = STATIONS.flatMap(({ dx, dy, data }) =>
  data.trim().split(/\s+/).map((p) => {
    const [x, y, w] = p.split(",").map(Number);
    return { x: x + dx, y: y + dy, w };
  })
).concat(
  BACKGROUND.flatMap(({ dx, dy, w, data }) =>
    parse(data).map(([x, y]) => ({ x: x + dx, y: y + dy, w }))
  )
);

const KERNEL = Array.from({ length: 13 }, (_, i) => i / 12);
const kernelAt = (t: number) => Math.exp(-4.5 * t * t);

const COPIES = [-WORLD, 0, WORLD];

function HeatMap() {
  return (
    <svg width="764" height="450" viewBox="0 0 2292 1350" display="block">
      <defs>
        <radialGradient id="dot">
          {KERNEL.map((t) => (
            <stop key={t} offset={t} stopColor="#000" stopOpacity={t === 1 ? 0 : kernelAt(t)} />
          ))}
        </radialGradient>
        <radialGradient id="hotDot">
          {KERNEL.map((t) => (
            <stop key={t} offset={t} stopColor="#000" stopOpacity={t === 1 ? 0 : Math.min(1, 1.8 * kernelAt(t))} />
          ))}
        </radialGradient>
        <filter id="heat" filterUnits="userSpaceOnUse" x="0" y="0" width="2292" height="1350" colorInterpolationFilters="sRGB">
          <feColorMatrix type="matrix" values="0 0 0 1 0  0 0 0 1 0  0 0 0 1 0  0 0 0 1 0" />
          <feComponentTransfer>
            <feFuncR type="table" tableValues="0.9 0.9 1 1" />
            <feFuncG type="table" tableValues="0 0 0.824 1" />
            <feFuncB type="table" tableValues="0 0 0 1" />
            <feFuncA type="table" tableValues="0 1 1 1" />
          </feComponentTransfer>
        </filter>
        <g id="world">
          <path d={LAND_D} fill="#dedede" />
          <path d={WATER_D} fill="#a0cfdf" />
        </g>
        <path id="borders" d={BORDER_D} fill="none" stroke="#6f6f6f" strokeWidth="2.4" strokeOpacity="0.75" />
        <g id="stations">
          {STATION_POINTS.map(({ x, y, w }, i) => (
            <circle key={i} cx={x} cy={y} r="36" fill={w > 1 ? "url(#hotDot)" : "url(#dot)"} opacity={Math.min(1, w)} />
          ))}
        </g>
      </defs>
      <g shapeRendering="crispEdges">
        {COPIES.map((dx) => <use key={dx} href="#world" x={dx} />)}
      </g>
      {COPIES.map((dx) => <use key={dx} href="#borders" x={dx} />)}
      <g opacity="0.7">
        <g filter="url(#heat)">
          {COPIES.map((dx) => <use key={dx} href="#stations" x={dx} />)}
        </g>
      </g>
    </svg>
  );
}

function Caret() {
  return (
    <svg width="10" height="6" viewBox="0 0 10 6">
      <path d="M1 1h8L5 5z" fill="#31333f" />
    </svg>
  );
}

function SelectField({ label, value }: { label: string; value: string }) {
  return (
    <Field $gap={21}>
      <Label>{label}</Label>
      <Select>
        {value}
        <Caret />
      </Select>
    </Field>
  );
}

interface SliderProps {
  label: string;
  value: string;
  min: string;
  max: string;
  fill: number;
}

function SliderField({ label, value, min, max, fill }: SliderProps) {
  return (
    <Field $gap={24}>
      <Label>{label}</Label>
      <SliderTop>
        <SliderValue style={{ transform: `translateX(${(fill * 304) / 100}px)` }}>{value}</SliderValue>
      </SliderTop>
      <Track $fill={fill}>
        <Thumb $fill={fill} />
      </Track>
      <Range>
        <span>{min}</span>
        <span>{max}</span>
      </Range>
    </Field>
  );
}

export default function App() {
  return (
    <Page>
      <GlobalStyle />
      <Sidebar>
        <SidebarTitle>Map Settings</SidebarTitle>
        <SelectField label="Heatmap Selection" value="Max Temp" />
        <SelectField label="Select a mapbox style" value="basic" />
        <SelectField label="Color Scale" value="hot" />
        <SliderField label="Set the radius of influence of each point" value="10" min="1" max="20" fill={47.37} />
        <SliderField label="Marker opacity" value="0.70" min="0.00" max="1.00" fill={70} />
      </Sidebar>
      <Main>
        <Title>Vacation Weather Dashboard</Title>
        <ChartRow>
          <MapFrame>
            <HeatMap />
            <MapLogo width="22" height="22" viewBox="0 0 22 22">
              <circle cx="11.3" cy="11.3" r="9.9" fill="#ffffff" stroke="#8f8f8f" strokeWidth="1.2" />
              <path d="M6.7 15.9V10.7A5.2 5.2 0 1 1 11.9 15.9Z" fill="#8f8f8f" />
              <path d="M12.2 7.2l.9 2.3 2.3.9-2.3.9-.9 2.3-.9-2.3-2.3-.9 2.3-.9z" fill="#ffffff" />
            </MapLogo>
            <InfoBadge width="24" height="24" viewBox="0 0 24 24">
              <circle cx="12" cy="12" r="12" fill="#eeeeee" />
              <circle cx="12" cy="12" r="7.2" fill="#333333" />
              <rect x="11" y="7.5" width="2.2" height="2" rx="1" fill="#eeeeee" />
              <path d="M10.7 10.8h2.6v5h-2.6z" fill="#eeeeee" />
            </InfoBadge>
          </MapFrame>
          <Legend>
            <LegendTitle>Max Temp</LegendTitle>
            <LegendBody>
              <ColorBar />
              <Ticks>
                {["100", "80", "60", "40", "20", "0", "−20", "−40"].map((t) => (
                  <Tick key={t}>{t}</Tick>
                ))}
              </Ticks>
            </LegendBody>
          </Legend>
          <FullscreenIcon width="16" height="16" viewBox="0 0 16 16">
            <path d="M1 1h6.6L5.9 2.8 8.4 5.3 6.2 7.4 3.7 4.9 1 7.4zM15.2 15.2H8.4l2-2L8.2 11 10.4 8.8 12.7 11 15.2 8.6z" fill="#7d7f88" />
          </FullscreenIcon>
        </ChartRow>
        <Expander>
          <ExpanderLabel>Explore the Data</ExpanderLabel>
          <svg width="16" height="16" viewBox="0 0 16 16">
            <path d="M3.8 6L8 10.2 12.2 6" fill="none" stroke="#31333f" strokeWidth="1.8" />
          </svg>
        </Expander>
      </Main>
    </Page>
  );
}
